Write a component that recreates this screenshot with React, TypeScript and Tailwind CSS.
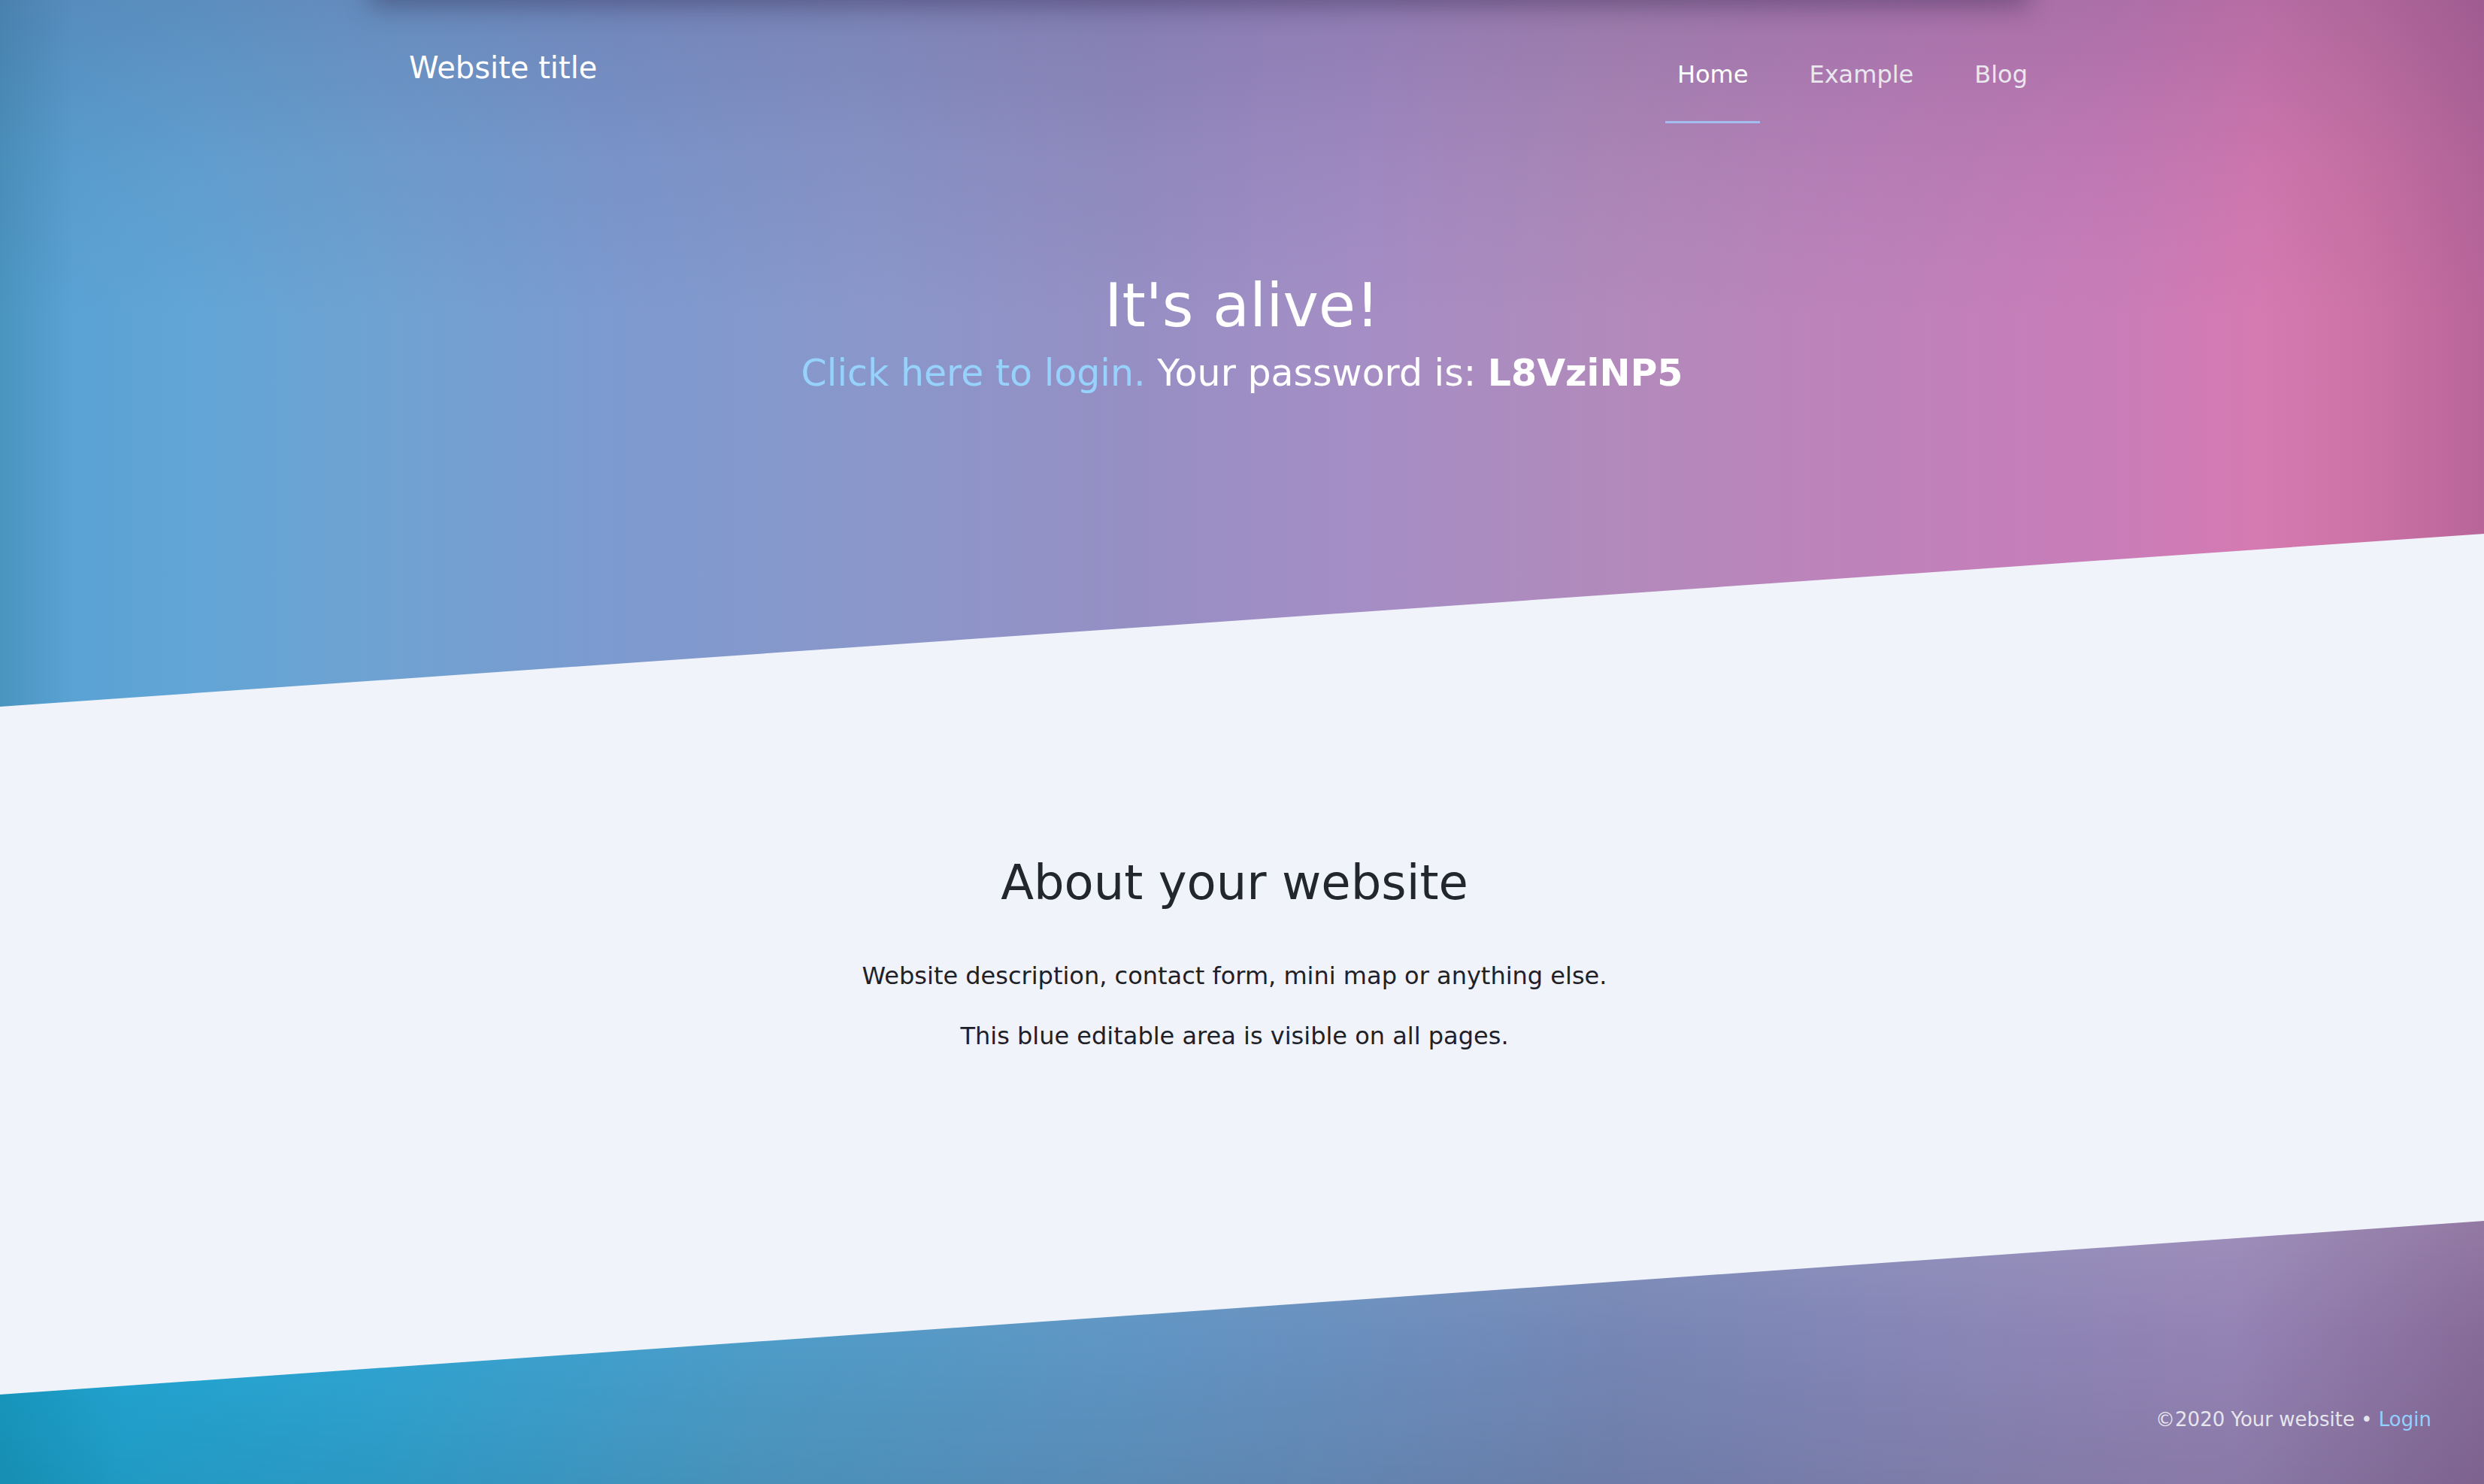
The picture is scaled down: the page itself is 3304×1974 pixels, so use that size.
import React from "react";

export default function App() {
  return (
    <div className="relative w-full h-[1974px] overflow-hidden font-['DejaVu_Sans','Verdana',sans-serif] bg-[linear-gradient(90deg,#4a94c0_0%,#5aa3d4_3%,#62a5d6_8%,#6ea2d2_15%,#7d9acf_25%,#8a97ca_35%,#958fc4_45%,#a58ec5_55%,#b28abb_65%,#be82bb_75%,#c97db8_85%,#d67ab2_91%,#cd73a7_95%,#b8659a_100%)]">
      {/* top tint */}
      <div className="pointer-events-none absolute inset-x-0 top-0 h-[420px] bg-[linear-gradient(180deg,rgba(70,60,110,0.22)_0%,rgba(70,60,110,0.08)_50%,rgba(70,60,110,0)_100%)]" />
      {/* shadow of element above the viewport */}
      <div className="pointer-events-none absolute left-[500px] top-[-30px] h-[30px] w-[2190px] shadow-[0_0_34px_8px_rgba(40,30,70,0.42)]" />

      <div className="relative flex flex-col">
        {/* header */}
        <header className="mx-auto flex w-[2220px] items-start justify-between pt-[60px]">
          <a className="pl-[2px] text-[40px] leading-[60px] text-white">Website title</a>
          <nav className="mr-[49px] mt-[15px] flex gap-[49px] text-[32px] leading-[48px]">
            <a className="border-b-[3px] border-[#a3bdf0] px-4 pb-[38px] text-white">Home</a>
            <a className="border-b-[3px] border-transparent px-4 pb-[38px] text-[#e8e8ee]">Example</a>
            <a className="border-b-[3px] border-transparent px-4 pb-[38px] text-[#e8e8ee]">Blog</a>
          </nav>
        </header>

        {/* hero */}
        <section className="flex h-[546px] flex-col items-center pt-[195px] text-white">
          <h1 className="text-[80px] leading-[96px]">It's alive!</h1>
          <p className="mt-[6px] text-[49px] leading-[72px]">
            <a className="text-[#96d2fb]">Click here to login.</a> Your password is:{" "}
            <b className="font-bold">L8VziNP5</b>
          </p>
        </section>

        {/* light section */}
        <section className="relative z-10 flex h-[1145px] flex-col items-center bg-[#f0f3fa] pr-[20px] pt-[426px] text-[#22262e] [clip-path:polygon(0_230px,100%_0,100%_calc(100%-231px),0_100%)]">
          <h2 className="text-[64px] leading-[77px]">About your website</h2>
          <p className="mt-[61px] text-[32px] leading-[48px] text-[#1e2128]">
            Website description, contact form, mini map or anything else.
          </p>
          <p className="mt-[32px] text-[32px] leading-[48px] text-[#1e2128]">
            This blue editable area is visible on all pages.
          </p>
        </section>

        {/* footer */}
        <footer className="relative z-0 -mt-[231px] flex h-[350px] justify-end bg-[linear-gradient(180deg,rgba(255,255,255,0.1)_0%,rgba(255,255,255,0)_45%,rgba(0,0,0,0.07)_100%),linear-gradient(90deg,#1898c0_0%,#22a5d2_5%,#2fa4d2_15%,#4d9cc8_30%,#5f95c3_45%,#6a8ebd_55%,#7586b5_65%,#8a85b5_80%,#9482b4_90%,#866a98_100%)] pr-[70px] pt-[245px]">
          <p className="text-[26px] leading-[39px] text-[#e6e6ec]">
            ©2020 Your website • <a className="text-[#92d0ff]">Login</a>
          </p>
        </footer>
      </div>
    </div>
  );
}
